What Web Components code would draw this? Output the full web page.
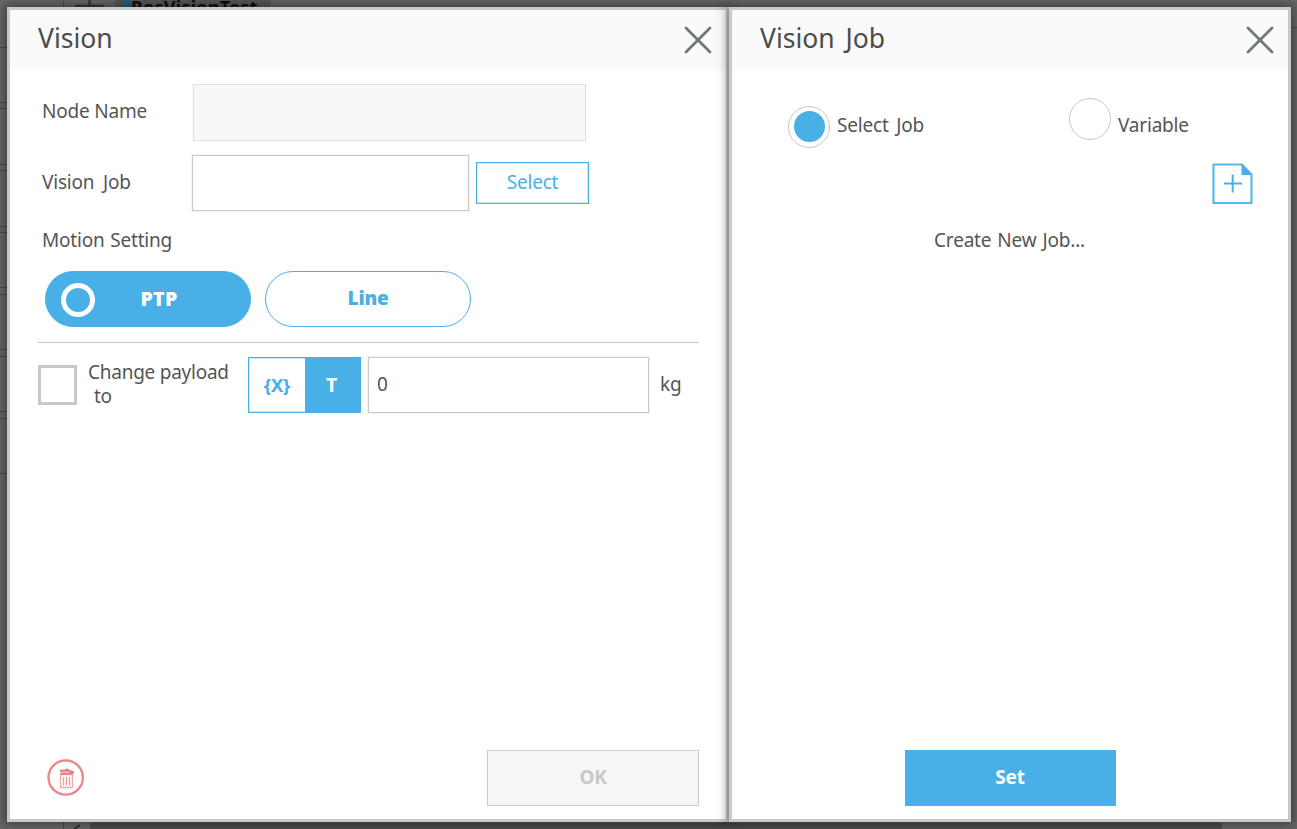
<!DOCTYPE html>
<html lang="en">
<head>
<meta charset="utf-8">
<title>Vision</title>
<style>
html,body{margin:0;height:100%;overflow:hidden}
body{font-family:"Noto Sans","Open Sans",sans-serif;font-size:19px;color:#555;letter-spacing:-.2px}
</style>
</head>
<body>
<vision-app></vision-app>
<script>
const define = (name, css, html) => {
  const tpl = document.createElement('template');
  tpl.innerHTML = `<style>*{box-sizing:border-box}:host{box-sizing:border-box}${css}</style>${html}`;
  customElements.define(name, class extends HTMLElement {
    constructor() {
      super();
      this.attachShadow({mode: 'open'}).append(tpl.content.cloneNode(true));
    }
  });
};

define('app-backdrop', `
:host{position:absolute;inset:0;overflow:hidden;background:#666}
.tab{position:absolute;left:115px;top:-14px;width:156px;height:26px;background:#575757}
.dot{position:absolute;left:120px;top:0;width:14px;height:14px;border-radius:50%;background:#27607f}
.name{position:absolute;left:131px;top:-6px;font-weight:700;font-size:18px;line-height:26px;color:#0c0c0c;letter-spacing:.25px}
svg{position:absolute;inset:0}
`, `<div class="tab"></div><div class="dot"></div><div class="name">RosVisionTest</div>
<svg width="1297" height="829" fill="none" stroke="#494949">
<path d="M63.5 0V8M63.5 822V829"/><path d="M75 6H104M89.5 0V8" stroke="#363b3b" stroke-width="2.5"/>
<path d="M0 47.500H8M0 102.500H8M0 108.500H8M0 164.500H8M0 170.500H8M0 226.500H8M0 232.500H8M0 287.500H8M0 294.500H8M0 349.500H8M0 356.500H8M0 411.500H8M0 418.500H8M0 473.500H8M1290 27.500H1297"/>
<path d="M90 826H1222" stroke="#4b4b4b" stroke-width="7"/><path d="M74 829L80 825" stroke="#333" stroke-width="2"/>
</svg>`);

define('ui-dialog', `
:host{display:flex;flex-direction:column;border:3px solid #c8c8c8;background:#fff;box-shadow:0 0 10px 2px rgba(0,0,0,.42)}
header{flex:0 0 60px;display:flex;justify-content:space-between;background:#fafafa;padding:0 13px 0 28px}
h2{margin:0;font-weight:400;font-size:26.500px;line-height:57px;color:#4c4c4c;letter-spacing:0;word-spacing:4px}
svg{display:block;margin-top:15px}
main{flex:1;display:flex;flex-direction:column;min-height:0}
`, `<header><h2><slot name="title"></slot></h2><svg width="30" height="30" fill="none" stroke="#717878" stroke-width="2.800" stroke-linecap="round"><path d="M3 3L27 27M27 3L3 27"/></svg></header><main><slot></slot></main>`);

define('ui-input', `
:host{display:flex;align-items:center;border:1px solid #c8c8c8;outline:1px solid rgba(200,200,200,.2);background:#fff;height:56px;padding:0 0 2px 8px}
:host([disabled]){background:#f8f8f8;border-color:#e0e0e0;height:57px;outline:0}
`, `<slot></slot>`);

define('ui-button', `
:host{display:flex;align-items:center;justify-content:center;width:212px;height:56px;font-weight:700;background:#48b0e6;color:#fff;padding-bottom:2px}
:host([disabled]){background:#f6f6f6;color:#c8c8c8;border:1px solid #ccc}
:host([outline]){width:113px;height:42px;font-weight:400;background:#fff;color:#48b0e6;border:1px solid #48b0e6;outline:1px solid rgba(72,176,230,.25);outline-offset:-2px}
`, `<slot></slot>`);

define('motion-pill', `
:host{display:flex;align-items:center;justify-content:center;position:relative;width:206px;height:56px;border:1.500px solid #48b0e6;border-radius:28px;background:#fff;color:#48b0e6;font-weight:900;padding-bottom:2px}
:host([selected]){background:#48b0e6;color:#fff;padding-left:22px;font-size:19.500px;letter-spacing:.3px}
i{display:none;position:absolute;left:14.500px;top:10.500px;width:34px;height:34px;border:5px solid #fff;border-radius:50%}
:host([selected]) i{display:block}
`, `<i></i><slot></slot>`);

define('mode-toggle', `
:host{display:grid;grid-template-columns:56px 55px;width:113px;height:56px;border:1px solid #48b0e6;outline:1px solid rgba(72,176,230,.3);outline-offset:-2px;color:#48b0e6;font-weight:700;font-size:18.500px}
div{display:flex;align-items:center;justify-content:center;padding-bottom:1px}
.on{background:#48b0e6;color:#fff;font-size:19.500px;padding-right:2px}
`, `<div>{X}</div><div class="on">T</div>`);

define('ui-checkbox', `:host{display:block;width:39px;height:40px;border:3px solid #c8c8c8;background:#fff}`, ``);

define('ui-radio', `
:host{display:flex;gap:7px}
i{display:flex;flex:none;align-items:center;justify-content:center;width:42px;height:42px;border:1.500px solid #c8c8c8;border-radius:50%;margin-top:var(--drop,0)}
:host([checked]) i::after{content:"";width:31px;height:31px;border-radius:50%;background:#48b0e6}
span{line-height:26px;margin-top:14px;word-spacing:3px}
`, `<i></i><span><slot></slot></span>`);

define('delete-button', `:host{display:block;width:38px;height:38px}svg{display:block}`, `
<svg width="38" height="38" fill="none" stroke="#ef8587"><circle cx="18.700" cy="18.500" r="17.200" stroke-width="2.300"/>
<path d="M13.500 15.500H25.500V28.500H13.500Z" stroke="#f5aaaa" stroke-width="1.300"/><path d="M16.500 18V26.500M19.500 18V26.500M22.500 18V26.500" stroke="#f19a9b" stroke-width="1.300"/>
<path d="M13 11.800H22L27 13.500M13.500 14.500H26" stroke="#ee7779" stroke-width="1.900"/><path d="M18 10.500H21.500" stroke="#ee7779" stroke-width="1.500"/></svg>`);

define('add-job-icon', `:host{display:block;width:42px;height:42px}svg{display:block}`, `
<svg width="42" height="42" fill="none" stroke="#5ab8e9"><path d="M2.500 2.500H31L40.500 12.500V41H2.500Z" stroke-width="2.200"/><path d="M30.500 2L41 13H30.500Z" fill="#48b0e6" stroke="none"/><path d="M13 21.500H31M21.700 12.500V30.500" stroke="#48b0e6" stroke-width="2"/></svg>`);

define('vision-form', `
:host{display:flex;flex-direction:column;flex:1;padding:14px 27px 13px 28px}
.row{display:grid;grid-template-columns:154px 277px 113px;align-items:center}
label{padding-left:4px;line-height:26px;padding-bottom:2px}
.name label{padding-bottom:4px}
.name ui-input{grid-column:2/4;width:393px;margin-left:1px}
.job{margin-top:14px}
.job label{word-spacing:4px}
.job ui-button{margin-left:7px}
.motion{margin-top:16px;word-spacing:1px}
.pills{display:flex;gap:14px;margin:16px 0 0 7px}
hr{width:661px;height:0;border:0;border-top:1.500px solid #c8c8c8;margin:14.500px 0 0}
.payload{display:flex;align-items:center;margin-top:14px}
.payload p{margin:0 0 2px 11px;width:160px;line-height:24px;letter-spacing:-.25px}
.payload p span{display:block;padding-left:6px}
.payload ui-input{width:281px;margin:0 12px 0 7px}
.payload .kg{padding-bottom:1px;margin-left:-1px}
footer{display:flex;justify-content:space-between;align-items:center;margin-top:auto;padding-left:9px}
`, `
<div class="row name"><label>Node Name</label><ui-input disabled></ui-input></div>
<div class="row job"><label>Vision Job</label><ui-input></ui-input><ui-button outline>Select</ui-button></div>
<label class="motion">Motion Setting</label>
<div class="pills"><motion-pill selected>PTP</motion-pill><motion-pill>Line</motion-pill></div>
<hr>
<div class="payload"><ui-checkbox></ui-checkbox><p>Change payload <span>to</span></p><mode-toggle></mode-toggle><ui-input>0</ui-input><span class="kg">kg</span></div>
<footer><delete-button></delete-button><ui-button disabled>OK</ui-button></footer>`);

define('job-form', `
:host{display:flex;flex-direction:column;flex:1;padding:28px 35px 13px 56px}
.radios{display:grid;grid-template-columns:281px 1fr}
.first{--drop:7.500px}
add-job-icon{align-self:flex-end;margin-top:14.500px}
p{margin:22.500px 0 0;line-height:26px;text-align:center;padding-right:22px;word-spacing:1.300px}
ui-button{align-self:center;margin:auto 21px 0 0;width:211px}
`, `
<div class="radios"><ui-radio class="first" checked>Select Job</ui-radio><ui-radio>Variable</ui-radio></div>
<add-job-icon></add-job-icon>
<p>Create New Job...</p>
<ui-button>Set</ui-button>`);

define('vision-app', `
:host{display:block;position:relative;width:1297px;height:829px;overflow:hidden}
.dialogs{position:relative;display:grid;grid-template-columns:722px 562px;padding:7px 6px 7px 7px;height:829px}
`, `
<app-backdrop></app-backdrop>
<div class="dialogs">
<ui-dialog><span slot="title">Vision</span><vision-form></vision-form></ui-dialog>
<ui-dialog><span slot="title">Vision Job</span><job-form></job-form></ui-dialog>
</div>`);
</script>
</body>
</html>
